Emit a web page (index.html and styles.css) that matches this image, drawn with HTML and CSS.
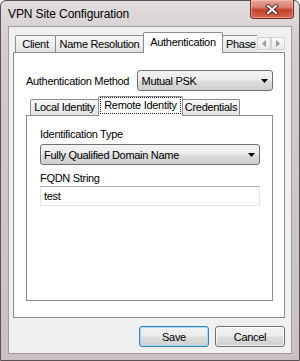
FILE: index.html
```html
<!DOCTYPE html>
<html lang="en">
<head>
    <meta charset="UTF-8">
    <title>VPN Site Configuration</title>
    <link rel="stylesheet" href="styles.css">
</head>
<body>
    <div class="window">
        <div class="titlebar">
            <span class="title">VPN Site Configuration</span>
            <span class="close-btn">
                <svg width="14" height="11" viewBox="0 0 14 11">
                    <path d="M3 2l8 7M11 2l-8 7" stroke="#5a2a24" stroke-width="4" stroke-linecap="square"/>
                    <path d="M3 2l8 7M11 2l-8 7" stroke="#fff" stroke-width="2" stroke-linecap="square"/>
                </svg>
            </span>
        </div>

        <div class="client">
            <div class="tab-strip">
                <span class="tab tab-client">Client</span>
                <span class="tab tab-names">Name Resolution</span>
                <span class="tab tab-auth active">Authentication</span>
                <span class="tab tab-phase">Phase</span>
                <span class="tab-scroll">
                    <span class="scroll-btn">
                        <svg width="4" height="7" viewBox="0 0 4 7"><path d="M4 0v7L0 3.5z" fill="#9a9a9a"/></svg>
                    </span>
                    <span class="scroll-btn">
                        <svg width="4" height="7" viewBox="0 0 4 7"><path d="M0 0v7l4-3.5z" fill="#9a9a9a"/></svg>
                    </span>
                </span>
            </div>
            <div class="tab-panel">
                <div class="field-row">
                    <label class="row-label">Authentication Method</label>
                    <div class="combo combo-method">
                        <span>Mutual PSK</span>
                        <svg width="7" height="4" viewBox="0 0 7 4"><path d="M0 0h7L3.5 4z" fill="#000"/></svg>
                    </div>
                </div>

                <div class="tab-strip sub">
                    <span class="tab tab-local">Local Identity</span>
                    <span class="tab tab-remote active"><span class="focus">Remote Identity</span></span>
                    <span class="tab tab-creds">Credentials</span>
                </div>
                <div class="tab-panel inner">
                    <label class="field-label">Identification Type</label>
                    <div class="combo combo-type">
                        <span>Fully Qualified Domain Name</span>
                        <svg width="7" height="4" viewBox="0 0 7 4"><path d="M0 0h7L3.5 4z" fill="#000"/></svg>
                    </div>
                    <label class="field-label fqdn">FQDN String</label>
                    <input class="text-box" type="text" value="test">
                </div>
            </div>

            <div class="buttons">
                <button class="btn default">Save</button>
                <button class="btn">Cancel</button>
            </div>
        </div>
    </div>
</body>
</html>
```

FILE: styles.css
```css
body {
    margin: 0;
    background-color: #fff;
    font-family: "Liberation Sans", Arial, sans-serif;
    font-size: 11px;
    letter-spacing: -0.3px;
    color: #000;
}
.window {
    box-sizing: border-box;
    width: 300px;
    height: 361px;
    display: flex;
    flex-direction: column;
    padding: 0 7px 6px 7px;
    border: 1px solid #5b5255;
    border-radius: 6px 6px 0 0;
    background: linear-gradient(#e2dddf 0%, #d3cccf 12%, #cdc6c8 60%, #c9c1c4 100%);
}
.titlebar {
    height: 26px;
    display: flex;
    justify-content: space-between;
}
.title {
    align-self: center;
    font-size: 12px;
    letter-spacing: -0.1px;
}
.close-btn {
    box-sizing: border-box;
    width: 44px;
    height: 19px;
    margin: -1px -2px 0 0;
    display: flex;
    align-items: center;
    justify-content: center;
    border: 1px solid #6d2c25;
    border-top: none;
    border-radius: 0 0 4px 4px;
    background: linear-gradient(#e7a79a 0%, #d8806f 40%, #c2402f 55%, #d56a4f 100%);
    box-shadow: inset 0 0 0 1px rgba(255, 200, 190, 0.5);
}

/* client area */
.client {
    flex: 1;
    display: flex;
    flex-direction: column;
    padding: 5px 6px 6px 4px;
    border: 1px solid #a29b9d;
    background-color: #f0f0f0;
}

/* tabs */
.tab-strip {
    height: 20px;
    display: flex;
    align-items: flex-end;
    padding-left: 2px;
}
.tab {
    box-sizing: border-box;
    height: 17px;
    margin-left: -1px;
    border: 1px solid #898c95;
    border-bottom: none;
    border-radius: 2px 2px 0 0;
    background: linear-gradient(#f7f7f7, #e3e3e3);
    line-height: 16px;
    text-align: center;
    white-space: nowrap;
}
.tab:first-child {
    margin-left: 0;
}
.tab.active {
    height: 21px;
    margin-bottom: -1px;
    position: relative;
    z-index: 1;
    background: #fff;
    line-height: 19px;
}
.tab-client { width: 41px; }
.tab-names { width: 89px; }
.tab-auth { width: 80px; }
.tab-phase {
    width: 35px;
    border-right: none;
    border-radius: 2px 0 0 0;
    text-align: left;
    padding-left: 3px;
}
.tab-scroll {
    display: flex;
    margin: 0 0 2px auto;
}
.scroll-btn {
    box-sizing: border-box;
    width: 14px;
    height: 13px;
    display: flex;
    align-items: center;
    justify-content: center;
    border: 1px solid #d2d2d2;
    background: linear-gradient(#f8f8f8, #ebebeb);
}
.tab-panel {
    box-sizing: border-box;
    height: 266px;
    padding: 17px 11px 0 12px;
    border: 1px solid #898c95;
    background-color: #fff;
}

/* sub tabs */
.tab-strip.sub {
    height: 19px;
    margin-top: 5px;
    padding-left: 4px;
}
.tab-strip.sub .tab {
    height: 16px;
    line-height: 15px;
}
.tab-strip.sub .tab.active {
    height: 20px;
    line-height: 17px;
}
.tab-local { width: 69px; }
.tab-remote { width: 85px; }
.tab-creds { width: 58px; }
.focus {
    display: block;
    box-sizing: border-box;
    height: 17px;
    margin: 0 1px;
    border: 1px dotted #222;
    line-height: 15px;
}
.tab-panel.inner {
    height: 186px;
    display: flex;
    flex-direction: column;
    align-items: flex-start;
    padding: 11px 0 0 13px;
}

/* fields */
.field-row {
    display: flex;
    align-items: center;
}
.row-label {
    width: 111px;
}
.combo {
    box-sizing: border-box;
    height: 21px;
    display: flex;
    align-items: center;
    justify-content: space-between;
    padding: 0 4px;
    border: 1px solid #707070;
    border-radius: 3px;
    background: linear-gradient(#f3f3f3 0%, #ebebeb 48%, #dddddd 52%, #cfcfcf 100%);
}
.combo-method {
    width: 137px;
}
.combo-type {
    width: 220px;
    margin-top: 3px;
    padding-left: 3px;
}
.field-label {
    line-height: 14px;
}
.field-label.fqdn {
    margin-top: 6px;
}
.text-box {
    box-sizing: border-box;
    width: 220px;
    height: 20px;
    margin: 1px 0 0 0;
    padding: 0 3px;
    border: 1px solid #e2e3ea;
    border-top-color: #abadb3;
    font-family: inherit;
    font-size: 11px;
    letter-spacing: -0.3px;
    color: #000;
}

/* buttons */
.buttons {
    display: flex;
    justify-content: flex-end;
    gap: 6px;
    margin-top: 8px;
}
.btn {
    box-sizing: border-box;
    width: 70px;
    height: 21px;
    padding: 0;
    border: 1px solid #707070;
    border-radius: 3px;
    background: linear-gradient(#f2f2f2 0%, #ebebeb 48%, #dddddd 52%, #cfcfcf 100%);
    box-shadow: inset 0 0 0 1px rgba(255, 255, 255, 0.7);
    font-family: inherit;
    font-size: 11px;
    letter-spacing: -0.3px;
    color: #000;
}
.btn.default {
    border-color: #3c7fb1;
    box-shadow: inset 0 0 0 1px #9fdcf8;
}
```
